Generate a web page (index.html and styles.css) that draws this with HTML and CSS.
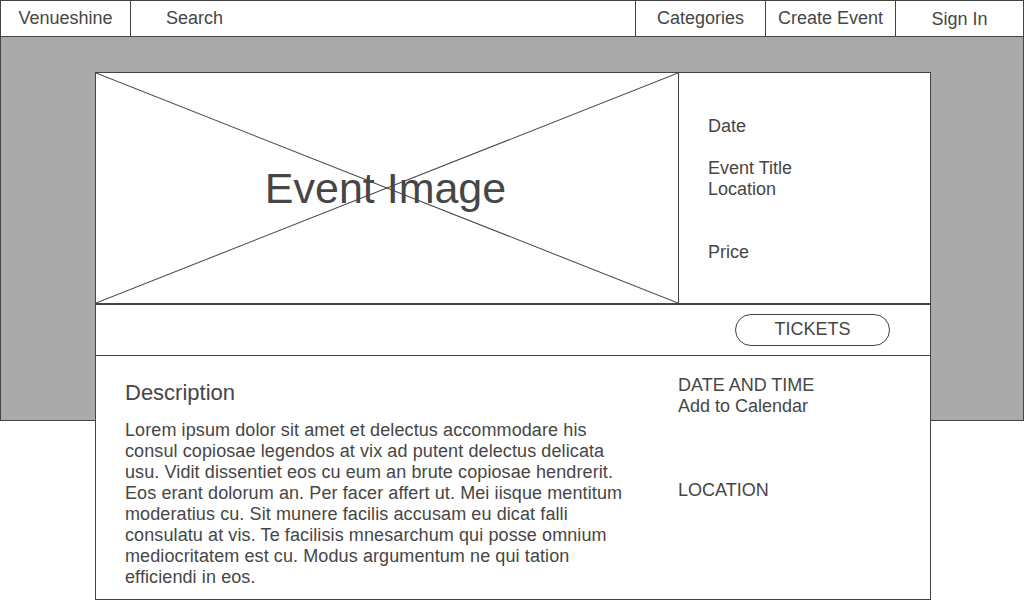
FILE: index.html
```html
<!DOCTYPE html>
<html lang="en">
<head>
  <meta charset="UTF-8">
  <title>Venueshine - Event</title>
  <link rel="stylesheet" href="styles.css">
</head>
<body>

  <div id="nav">
    <a href="#" class="brand">Venueshine</a>
    <a href="#" class="search">Search</a>
    <a href="#" class="link">Categories</a>
    <a href="#" class="link">Create Event</a>
    <a href="#" class="link signin">Sign In</a>
  </div>

  <div id="hero"></div>

  <div id="event">

    <div class="top">
      <div class="image">
        <svg class="cross" viewBox="0 0 100 100" preserveAspectRatio="none">
          <line x1="0" y1="0" x2="100" y2="100" vector-effect="non-scaling-stroke"/>
          <line x1="100" y1="0" x2="0" y2="100" vector-effect="non-scaling-stroke"/>
        </svg>
        <span class="label">Event Image</span>
      </div>
      <div class="info">
        <p class="date">Date</p>
        <p class="title">Event Title</p>
        <p class="location">Location</p>
        <p class="price">Price</p>
      </div>
    </div>

    <div class="tickets_row">
      <a href="#" class="tickets">TICKETS</a>
    </div>

    <div class="details">
      <div class="description">
        <h2>Description</h2>
        <p>Lorem ipsum dolor sit amet et delectus accommodare his consul copiosae legendos at vix ad putent delectus delicata usu. Vidit dissentiet eos cu eum an brute copiosae hendrerit. Eos erant dolorum an. Per facer affert ut. Mei iisque mentitum moderatius cu. Sit munere facilis accusam eu dicat falli consulatu at vis. Te facilisis mnesarchum qui posse omnium mediocritatem est cu. Modus argumentum ne qui tation efficiendi in eos.</p>
      </div>
      <div class="side">
        <p>DATE AND TIME</p>
        <p>Add to Calendar</p>
        <p class="loc">LOCATION</p>
      </div>
    </div>

  </div>

</body>
</html>
```

FILE: styles.css
```css
body {
  margin: 0;
  background: #fff;
  font-family: "Liberation Sans", Arial, sans-serif;
  color: #464646;
}

p {
  margin: 0;
}

#nav {
  display: flex;
  height: 37px;
  border: 1px solid #444;
  box-sizing: border-box;
  font-size: 18px;
}

#nav a {
  display: flex;
  align-items: center;
  justify-content: center;
  color: #464646;
  text-decoration: none;
  border-right: 1px solid #444;
  box-sizing: border-box;
  width: 130px;
  flex: none;
}

#nav a.search {
  flex: 1;
  justify-content: flex-start;
  padding-left: 35px;
}

#nav a.signin {
  border-right: none;
  width: 127px;
  padding-top: 2px;
}

/* grey band behind the event card */
#hero {
  height: 384px;
  background: #aaa;
  border: 1px solid #444;
  border-top: none;
  box-sizing: border-box;
}

#event {
  width: 836px;
  margin: -349px 0 0 95px;
  background: #fff;
  border: 1px solid #444;
  box-sizing: border-box;
  font-size: 18px;
}

#event .top {
  display: grid;
  grid-template-columns: 583px 1fr;
  height: 232px;
  box-sizing: border-box;
  border-bottom: 2px solid #444;
}

#event .image {
  position: relative;
  border-right: 1px solid #444;
  display: flex;
  align-items: center;
  justify-content: center;
}

#event .cross {
  position: absolute;
  top: 0;
  left: 0;
  width: 100%;
  height: 100%;
}

#event .cross line {
  stroke: #444;
  stroke-width: 1;
}

#event .label {
  position: relative;
  font-size: 43px;
  margin-right: 3px;
}

#event .info {
  padding: 43px 0 0 29px;
  line-height: 21px;
}

#event .info .title {
  margin-top: 21px;
}

#event .info .price {
  margin-top: 42px;
}

.tickets_row {
  height: 51px;
  border-bottom: 1px solid #444;
  box-sizing: border-box;
  display: flex;
  align-items: center;
  justify-content: flex-end;
  padding-right: 40px;
}

.tickets {
  width: 155px;
  height: 32px;
  box-sizing: border-box;
  border: 1px solid #444;
  border-radius: 16px;
  display: flex;
  align-items: center;
  justify-content: center;
  color: #464646;
  text-decoration: none;
  font-size: 18px;
  padding-bottom: 1px;
}

.details {
  display: grid;
  grid-template-columns: 582px 1fr;
  line-height: 21px;
}

.description {
  padding: 24px 0 11px 29px;
}

.description h2 {
  margin: 0 0 14px 0;
  font-size: 22px;
  font-weight: normal;
  line-height: 26px;
}

.description p {
  width: 508px;
  letter-spacing: 0.1px;
}

.side {
  padding-top: 19px;
}

.side .loc {
  margin-top: 63px;
}
```
